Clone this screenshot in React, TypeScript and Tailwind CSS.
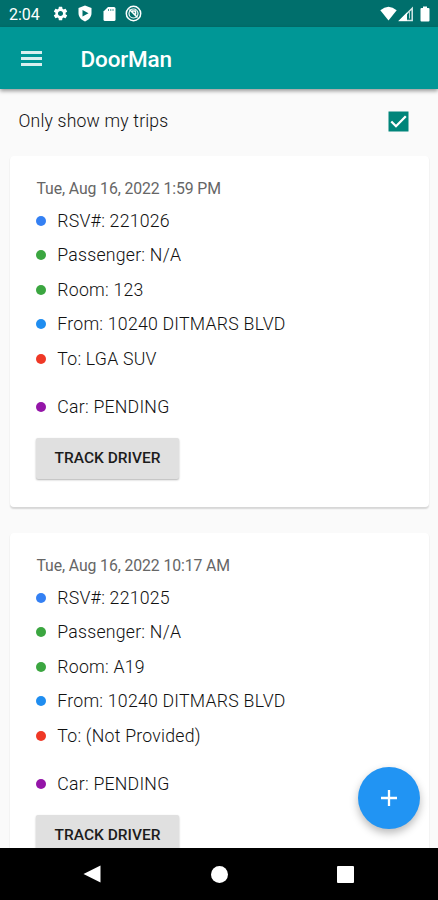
import React from "react";
import { MdSettings } from "react-icons/md";

type Row = { color: string; text: string };
type Trip = { date: string; rows: Row[] };

const trips: Trip[] = [
  {
    date: "Tue, Aug 16, 2022 1:59 PM",
    rows: [
      { color: "bg-[#3480f3]", text: "RSV#: 221026" },
      { color: "bg-[#3ba640]", text: "Passenger: N/A" },
      { color: "bg-[#3ba640]", text: "Room: 123" },
      { color: "bg-[#1f8df0]", text: "From: 10240 DITMARS BLVD" },
      { color: "bg-[#ef3826]", text: "To: LGA SUV" },
    ],
  },
  {
    date: "Tue, Aug 16, 2022 10:17 AM",
    rows: [
      { color: "bg-[#3480f3]", text: "RSV#: 221025" },
      { color: "bg-[#3ba640]", text: "Passenger: N/A" },
      { color: "bg-[#3ba640]", text: "Room: A19" },
      { color: "bg-[#1f8df0]", text: "From: 10240 DITMARS BLVD" },
      { color: "bg-[#ef3826]", text: "To: (Not Provided)" },
    ],
  },
];

function Detail({ color, text }: Row) {
  return (
    <div className="flex h-[34.5px] items-center text-[17.7px] font-light tracking-[0.23px] whitespace-nowrap text-[#111]">
      <span className={`mr-[11.3px] mb-px size-[10px] rounded-full ${color}`} />
      {text}
    </div>
  );
}

function TripCard({ trip }: { trip: Trip }) {
  return (
    <section className="h-[350.5px] shrink-0 rounded-[4px] bg-white pt-[20px] pl-[26px] shadow-[0_1.5px_1.5px_rgba(0,0,0,0.14)]">
      <div className="h-[28px] pt-px pl-[0.5px] text-[15.8px] leading-[24px] tracking-[-0.1px] whitespace-nowrap text-[#666]">
        {trip.date}
      </div>
      {trip.rows.map((row) => (
        <Detail key={row.text} {...row} />
      ))}
      <div className="mt-[13.5px]">
        <Detail color="bg-[#9415a8]" text="Car: PENDING" />
      </div>
      <button className="mt-[13.5px] flex h-[41px] w-[143px] items-center justify-center rounded-[2px] bg-[#e0e0e0] text-[15.5px] font-medium whitespace-nowrap text-[#1c1c1c] shadow-[0_1px_2px_rgba(0,0,0,0.3)]">
        TRACK DRIVER
      </button>
    </section>
  );
}

function StatusBar() {
  return (
    <div className="flex h-[27px] shrink-0 items-center bg-[#006f6c] pl-[9px] text-white">
      <span className="w-[42.5px] pt-[2px] text-[16px] leading-none">2:04</span>
      <MdSettings size={17} />
      <svg className="ml-[8px]" width="16" height="17" viewBox="0 0 16 17">
        <path fill="#fff" d="M8 .5 14.500 3v5c0 4-2.700 7-6.500 8.500C4.200 15 1.500 12 1.500 8V3z" />
        <path fill="#006f6c" d="M5.500 5v6.500L11.500 8.200z" />
      </svg>
      <svg className="ml-[10px]" width="13" height="16" viewBox="0 0 13 16">
        <path fill="#fff" d="M5 1h6q1.500 0 1.500 1.500v11Q12.500 15 11 15H2Q.5 15 .5 13.500v-8z" />
        <path stroke="#006f6c" strokeWidth="0.700" d="M5.500 3v2M7.800 3v2M10 3v2" />
      </svg>
      <svg className="ml-[9.5px]" width="17" height="17" viewBox="0 0 17 17" fill="none" stroke="#fff">
        <circle cx="8.500" cy="8.500" r="7.200" strokeWidth="1.500" />
        <circle cx="8.500" cy="8.500" r="4.500" strokeWidth="1.200" />
        <path strokeWidth="1.600" d="m4.500 4.500 8 8M7 6h3.500v3.500" />
      </svg>
      <svg className="ml-auto" width="17" height="15" viewBox="0 0 17 15">
        <path fill="#fff" d="M.3 4.200Q8.500-2.800 16.700 4.200L8.500 14.500z" />
      </svg>
      <svg className="ml-[1px]" width="16" height="16" viewBox="0 0 16 16">
        <path fill="none" stroke="#d5e9e8" strokeWidth="1.500" d="M14.200 2.200v12.300H2z" />
        <path fill="#fff" d="M9 6.500V15H.5z" />
        <path fill="none" stroke="#b3d4d3" strokeWidth="1" d="M11.500 6v6.500" />
      </svg>
      <svg className="mr-[8px] ml-[6px]" width="10" height="16" viewBox="0 0 10 16">
        <path fill="#fff" d="M3 .5h4v1.500h1.500q1 0 1 1V14.500q0 1-1 1h-7q-1 0-1-1V3q0-1 1-1H3z" />
      </svg>
    </div>
  );
}

export default function App() {
  return (
    <div className="relative flex h-[900px] w-[438px] flex-col overflow-hidden bg-[#fafafa] font-['Roboto',sans-serif]">
      <StatusBar />
      <header className="z-10 flex h-[62px] shrink-0 items-center bg-[#009796] pl-[21px] text-white shadow-[0_2px_4px_rgba(0,0,0,0.4)]">
        <div className="flex w-[21px] flex-col gap-[3px] pt-px">
          <span className="h-[3px] bg-white/85" />
          <span className="h-[3px] bg-white/85" />
          <span className="h-[3px] bg-white/85" />
        </div>
        <h1 className="ml-[38.5px] pt-[3px] text-[22.5px] font-medium tracking-[-0.15px]">DoorMan</h1>
      </header>
      <label className="flex h-[67px] shrink-0 items-center justify-between pr-[29.5px] pb-[3px] pl-[18.5px] text-[17.6px] font-light tracking-[0.18px] text-[#111]">
        Only show my trips
        <svg width="21" height="21" viewBox="0 0 21 21">
          <path fill="#00857a" d="M.5.500h20v20H.5z" />
          <path fill="none" stroke="#fff" strokeWidth="2.300" d="m3.300 10.500 4.700 4.700L17.800 5.300" />
        </svg>
      </label>
      <main className="flex min-h-0 flex-1 flex-col gap-[26.5px] overflow-hidden pr-[9.500px] pl-[10px]">
        {trips.map((trip) => (
          <TripCard key={trip.date} trip={trip} />
        ))}
      </main>
      <nav className="flex h-[52px] shrink-0 items-center justify-between bg-black pr-[84px] pl-[83px]">
        <svg width="18" height="18" viewBox="0 0 18 18">
          <path fill="#fff" d="M17.500.5v17L.5 9z" />
        </svg>
        <span className="size-[17px] rounded-full bg-white" />
        <span className="size-[17px] rounded-[1px] bg-white" />
      </nav>
      <button
        aria-label="Add trip"
        className="absolute top-[767px] left-[358px] flex size-[62px] items-center justify-center rounded-full bg-[#2194f3] shadow-[0_4px_8px_rgba(0,0,0,0.28)]"
      >
        <svg width="18" height="18" viewBox="0 0 18 18">
          <path stroke="#fff" strokeWidth="2.300" d="M9 1v16M1 9h16" />
        </svg>
      </button>
    </div>
  );
}
